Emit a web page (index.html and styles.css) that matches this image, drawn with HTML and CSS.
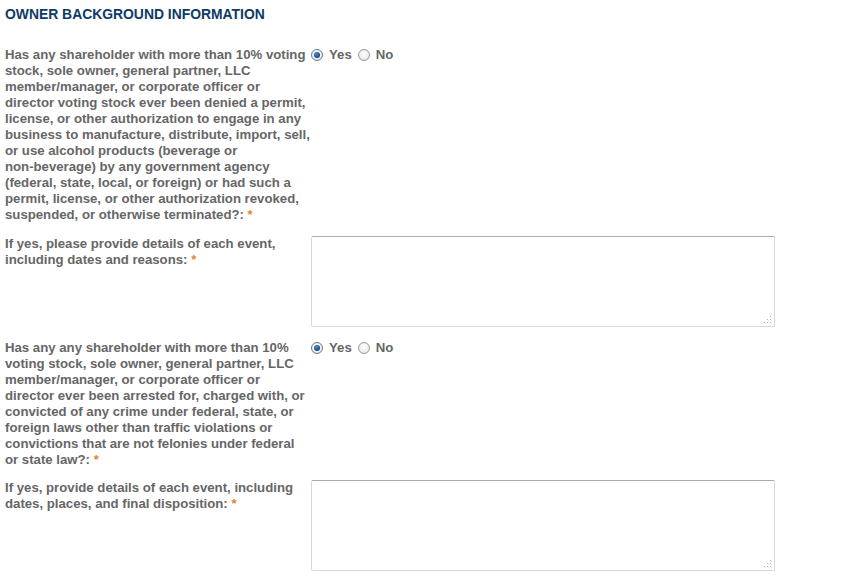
FILE: index.html
```html
<!DOCTYPE html>
<html>
<head>
<meta charset="utf-8">
<link rel="stylesheet" href="styles.css">
</head>
<body>
<div class="page">
  <h2 class="heading">OWNER BACKGROUND INFORMATION</h2>

  <div class="row q1">
    <div class="label">Has any shareholder with more than 10% voting stock, sole owner, general partner, LLC member/manager, or corporate officer or director voting stock ever been denied a permit, license, or other authorization to engage in any business to manufacture, distribute, import, sell, or use alcohol products (beverage or <span class="nb">non-beverage)</span> by any government agency (federal, state, local, or foreign) or had such a permit, license, or other authorization revoked, suspended, or otherwise terminated?: <span class="req">*</span></div>
    <div class="field radios">
      <span class="radio checked"></span><span class="opt">Yes</span>
      <span class="radio"></span><span class="opt">No</span>
    </div>
  </div>

  <div class="row t1">
    <div class="label">If yes, please provide details of each event, including dates and reasons: <span class="req">*</span></div>
    <div class="field">
      <div class="ta-wrap">
        <textarea class="ta"></textarea>
        <svg class="grip" width="8" height="8" viewBox="0 0 8 8"><g fill="#b4b4b4"><rect x="6" y="0" width="1" height="1"/><rect x="3" y="3" width="1" height="1"/><rect x="6" y="3" width="1" height="1"/><rect x="0" y="6" width="1" height="1"/><rect x="3" y="6" width="1" height="1"/><rect x="6" y="6" width="1" height="1"/></g><g fill="#e2e2e2"><rect x="7" y="1" width="1" height="1"/><rect x="4" y="4" width="1" height="1"/><rect x="7" y="4" width="1" height="1"/><rect x="1" y="7" width="1" height="1"/><rect x="4" y="7" width="1" height="1"/><rect x="7" y="7" width="1" height="1"/></g></svg>
      </div>
    </div>
  </div>

  <div class="row q2">
    <div class="label">Has any any shareholder with more than 10% voting stock, sole owner, general partner, LLC member/manager, or corporate officer or director ever been arrested for, charged with, or convicted of any crime under federal, state, or foreign laws other than traffic violations or convictions that are not felonies under federal <span class="nb">or state</span> law?: <span class="req">*</span></div>
    <div class="field radios">
      <span class="radio checked"></span><span class="opt">Yes</span>
      <span class="radio"></span><span class="opt">No</span>
    </div>
  </div>

  <div class="row t2">
    <div class="label">If yes, provide details of each event, including dates, places, and final disposition: <span class="req">*</span></div>
    <div class="field">
      <div class="ta-wrap">
        <textarea class="ta"></textarea>
        <svg class="grip" width="8" height="8" viewBox="0 0 8 8"><g fill="#b4b4b4"><rect x="6" y="0" width="1" height="1"/><rect x="3" y="3" width="1" height="1"/><rect x="6" y="3" width="1" height="1"/><rect x="0" y="6" width="1" height="1"/><rect x="3" y="6" width="1" height="1"/><rect x="6" y="6" width="1" height="1"/></g><g fill="#e2e2e2"><rect x="7" y="1" width="1" height="1"/><rect x="4" y="4" width="1" height="1"/><rect x="7" y="4" width="1" height="1"/><rect x="1" y="7" width="1" height="1"/><rect x="4" y="7" width="1" height="1"/><rect x="7" y="7" width="1" height="1"/></g></svg>
      </div>
    </div>
  </div>
</div>
</body>
</html>
```
FILE: styles.css
```css
html, body {
  margin: 0;
  padding: 0;
  background: #ffffff;
}
.page {
  padding: 7px 5px 0 5px;
  font-family: "Liberation Sans", Arial, sans-serif;
  font-size: 13.2px;
  font-weight: bold;
  color: #666666;
}
.heading {
  margin: 0 0 25px 0;
  font-size: 13.9px;
  line-height: 15px;
  color: #0e3a66;
  font-weight: bold;
}
.row {
  display: flex;
  align-items: flex-start;
}
.label {
  width: 307px;
  flex: 0 0 307px;
  line-height: 16px;
}
.nb {
  white-space: nowrap;
}
.req {
  color: #e2871f;
  font-size: 13px;
}
.field {
  flex: 0 0 auto;
  margin-left: -1px;
}
.radios {
  display: flex;
  align-items: center;
  height: 16px;
  line-height: 16px;
}
.radio {
  box-sizing: border-box;
  width: 12px;
  height: 12px;
  border-radius: 50%;
  border: 1px solid #9a9a9a;
  background: radial-gradient(circle at 50% 40%, #ffffff 0%, #ededed 60%, #d8d8d8 100%);
  position: relative;
}
.radio.checked {
  border-color: #6c7a88;
}
.radio.checked::after {
  content: "";
  position: absolute;
  left: 2px;
  top: 2px;
  width: 6px;
  height: 6px;
  border-radius: 50%;
  background: radial-gradient(circle at 40% 35%, #4f8fc6 0%, #1d4f86 60%, #0f2f55 100%);
}
.opt {
  margin-left: 6px;
  margin-right: 6px;
}
.ta-wrap {
  position: relative;
  width: 464px;
  height: 91px;
}
.ta {
  box-sizing: border-box;
  display: block;
  width: 464px;
  height: 91px;
  margin: 0;
  padding: 2px;
  border: 1px solid #d6d9de;
  border-top-color: #a9abae;
  border-radius: 2px;
  resize: none;
  background: #ffffff;
  font-family: "Liberation Sans", Arial, sans-serif;
  font-size: 13px;
}
.grip {
  position: absolute;
  right: 3px;
  bottom: 3px;
}
.q1 { margin-bottom: 13px; }
.t1 { margin-bottom: 13px; }
.q2 { margin-bottom: 12px; }
```
